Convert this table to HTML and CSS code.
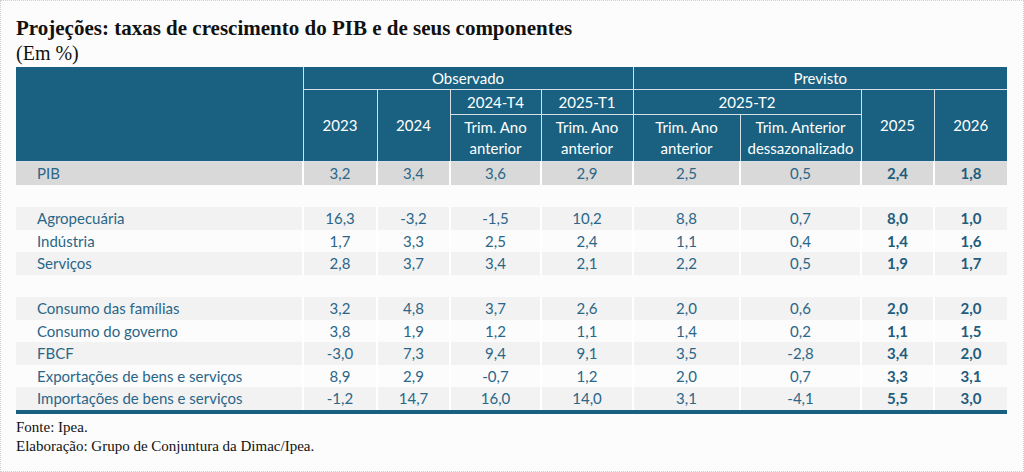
FILE: index.html
```html
<!DOCTYPE html>
<html lang="pt-BR">
<head>
<meta charset="utf-8">
<title>Projeções</title>
<link rel="stylesheet" href="styles.css">
</head>
<body>
<div class="page">
  <h1 class="title">Projeções: taxas de crescimento do PIB e de seus componentes</h1>
  <div class="subtitle">(Em %)</div>
  <table class="data">
    <colgroup>
      <col class="c-label"><col class="c-2023"><col class="c-2024"><col class="c-t4"><col class="c-t1"><col class="c-t2a"><col class="c-t2b"><col class="c-2025"><col class="c-2026">
    </colgroup>
    <thead>
      <tr class="h1">
        <th rowspan="3"></th>
        <th colspan="4">Observado</th>
        <th colspan="4">Previsto</th>
      </tr>
      <tr class="h2">
        <th rowspan="2">2023</th>
        <th rowspan="2">2024</th>
        <th>2024-T4</th>
        <th>2025-T1</th>
        <th colspan="2">2025-T2</th>
        <th rowspan="2">2025</th>
        <th rowspan="2">2026</th>
      </tr>
      <tr class="h3">
        <th>Trim. Ano<br>anterior</th>
        <th>Trim. Ano<br>anterior</th>
        <th>Trim. Ano<br>anterior</th>
        <th>Trim. Anterior<br>dessazonalizado</th>
      </tr>
    </thead>
    <tbody>
      <tr class="dark"><td>PIB</td><td>3,2</td><td>3,4</td><td>3,6</td><td>2,9</td><td>2,5</td><td>0,5</td><td class="b">2,4</td><td class="b">1,8</td></tr>
      <tr class="gap"><td colspan="9"></td></tr>
      <tr class="alt"><td>Agropecuária</td><td>16,3</td><td>-3,2</td><td>-1,5</td><td>10,2</td><td>8,8</td><td>0,7</td><td class="b">8,0</td><td class="b">1,0</td></tr>
      <tr><td>Indústria</td><td>1,7</td><td>3,3</td><td>2,5</td><td>2,4</td><td>1,1</td><td>0,4</td><td class="b">1,4</td><td class="b">1,6</td></tr>
      <tr class="alt"><td>Serviços</td><td>2,8</td><td>3,7</td><td>3,4</td><td>2,1</td><td>2,2</td><td>0,5</td><td class="b">1,9</td><td class="b">1,7</td></tr>
      <tr class="gap"><td colspan="9"></td></tr>
      <tr class="alt"><td>Consumo das famílias</td><td>3,2</td><td>4,8</td><td>3,7</td><td>2,6</td><td>2,0</td><td>0,6</td><td class="b">2,0</td><td class="b">2,0</td></tr>
      <tr><td>Consumo do governo</td><td>3,8</td><td>1,9</td><td>1,2</td><td>1,1</td><td>1,4</td><td>0,2</td><td class="b">1,1</td><td class="b">1,5</td></tr>
      <tr class="alt"><td>FBCF</td><td>-3,0</td><td>7,3</td><td>9,4</td><td>9,1</td><td>3,5</td><td>-2,8</td><td class="b">3,4</td><td class="b">2,0</td></tr>
      <tr><td>Exportações de bens e serviços</td><td>8,9</td><td>2,9</td><td>-0,7</td><td>1,2</td><td>2,0</td><td>0,7</td><td class="b">3,3</td><td class="b">3,1</td></tr>
      <tr class="alt last"><td>Importações de bens e serviços</td><td>-1,2</td><td>14,7</td><td>16,0</td><td>14,0</td><td>3,1</td><td>-4,1</td><td class="b">5,5</td><td class="b">3,0</td></tr>
    </tbody>
  </table>
  <div class="notes">
    <p>Fonte: Ipea.</p>
    <p>Elaboração: Grupo de Conjuntura da Dimac/Ipea.</p>
  </div>
</div>
</body>
</html>
```

FILE: styles.css
```css
html, body {
  margin: 0;
  padding: 0;
  background: #fcfcfc;
}
.page {
  box-sizing: border-box;
  width: 1024px;
  height: 472px;
  border: 1px dotted #cfcfcf;
  padding: 15px 0 0 15px;
  overflow: hidden;
}
.title {
  margin: 0;
  font-family: "Liberation Serif", "Times New Roman", serif;
  font-weight: bold;
  font-size: 21px;
  line-height: 24px;
  color: #111;
}
.subtitle {
  font-family: "Liberation Serif", "Times New Roman", serif;
  font-size: 20px;
  line-height: 26px;
  color: #111;
  margin-bottom: 1px;
}
.data {
  border-collapse: collapse;
  table-layout: fixed;
  width: 991px;
  font-family: Lato, "Open Sans", sans-serif;
  font-size: 15px;
  color: #2a6688;
}
.c-label { width: 287px; }
.c-2023 { width: 74px; }
.c-2024 { width: 73px; }
.c-t4 { width: 91px; }
.c-t1 { width: 92px; }
.c-t2a { width: 107px; }
.c-t2b { width: 121px; }
.c-2025 { width: 73px; }
.c-2026 { width: 73px; }

.data th {
  background: #1a6181;
  color: #fff;
  font-weight: normal;
  border: 1px solid #d4e0e6;
  padding: 0;
  text-align: center;
  line-height: 21px;
}
.data thead tr:first-child th { border-top: 0; }
.data th:first-child { border-left: 0; }
.h1 th { height: 22px; }
.h2 th { height: 24px; }
.h3 th { height: 46px; }
.data thead tr:first-child th:last-child,
.h2 th:last-child { border-right: 0; }

.data td {
  height: 22.5px;
  padding: 0;
  text-align: center;
  border-left: 2px solid #fff;
  border-right: 2px solid #fff;
  line-height: 20px;
}
.data td:first-child {
  text-align: left;
  padding-left: 21px;
  border-left: 0;
}
.data td:last-child { border-right: 0; }
.data tr.dark td { background: #d9d9d9; }
.data tr.alt td { background: #f2f2f2; }
.data tr.gap td { background: #fcfcfc; border: 0; }
.data td.b { font-weight: bold; color: #1f5d7d; }
.data tr.last td { border-bottom: 4px solid #1a6181; }

.notes {
  margin-top: 4px;
  font-family: "Liberation Serif", "Times New Roman", serif;
  font-size: 15px;
  line-height: 19px;
  color: #111;
}
.notes p { margin: 0; }
```
